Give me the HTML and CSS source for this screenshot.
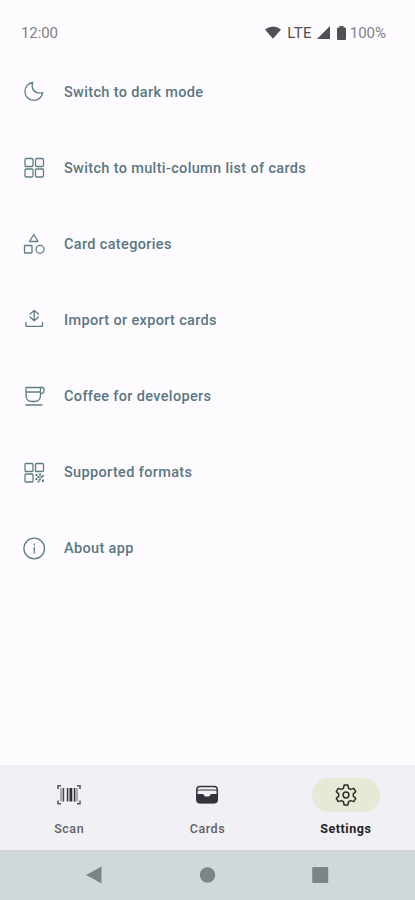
FILE: index.html
```html
<!DOCTYPE html>
<html lang="en">
<head>
<meta charset="utf-8">
<title>Settings</title>
<link rel="stylesheet" href="styles.css">
</head>
<body>
<div class="screen">
  <header class="status">
    <span class="clock">12:00</span>
    <div class="indicators">
      <svg class="wifi" viewBox="0 0 16 13"><path d="M0 3.500Q8-2.500 16 3.500L8 12.700Z"/></svg>
      <span class="network">LTE</span>
      <svg class="signal" viewBox="0 0 13 13"><path d="M13 0V13H0Z"/></svg>
      <svg class="battery" viewBox="0 0 9 14"><path d="M2.500 0h4v1.500H8q1 0 1 1V13q0 1-1 1H1q-1 0-1-1V2.500q0-1 1-1h1.500Z"/></svg>
      <span class="percent">100%</span>
    </div>
  </header>
  <main class="list">
    <div class="row">
      <svg class="icon" viewBox="0 0 24 24"><path d="M10.800 2.500A9 9 0 1 0 20.800 12.600Q18 13.800 14.500 12.400Q11 11 10.300 7.500Q10 5 10.800 2.500Z"/></svg>
      <span class="label">Switch to dark mode</span>
    </div>
    <div class="row">
      <svg class="icon" viewBox="0 0 24 24"><rect x="3" y="2.500" width="8" height="8" rx="1.300"/><rect x="13.500" y="2.500" width="8" height="8" rx="1.300"/><rect x="3" y="13" width="8" height="8" rx="1.300"/><rect x="13.500" y="13" width="8" height="8" rx="1.300"/></svg>
      <span class="label">Switch to multi-column list of cards</span>
    </div>
    <div class="row">
      <svg class="icon" viewBox="0 0 24 24"><path d="M11.800 2.500L16 9.500H7.500Z"/><rect x="2.500" y="13.500" width="7.500" height="7.500" rx=".5"/><circle cx="18" cy="17.300" r="4"/></svg>
      <span class="label">Card categories</span>
    </div>
    <div class="row">
      <svg class="icon" viewBox="0 0 24 24"><path d="M12.200 2.800V12.500M8 6L12.200 2.500L16.500 6M8 9L12.200 12.800L16.500 9M4 14.500V18.300H20.500V14.500"/></svg>
      <span class="label">Import or export cards</span>
    </div>
    <div class="row">
      <svg class="icon" viewBox="0 0 24 24"><path d="M4 2.500H20.500Q22 2.500 22 4V6Q22 8.500 18.500 8.500M4 2.500V10Q4 16.500 10 16.500H12.500Q18.500 16.500 18.500 10V2.500M4 7H18.500M4 20H20"/></svg>
      <span class="label">Coffee for developers</span>
    </div>
    <div class="row">
      <svg class="icon" viewBox="0 0 24 24"><rect x="3" y="2.500" width="8" height="8" rx="1"/><rect x="13.500" y="2.500" width="8" height="8" rx="1"/><rect x="3" y="13" width="8" height="8" rx="1"/><path class="dots" d="M13.500 13h2v2h-2zM17 12.500h2v2h-2zM20 14h2v1.500h-2zM15.500 15h2v2h-2zM18.500 15h2v2h-2zM13.500 17h2v2h-2zM17 17.500h2v2h-2zM15.500 19.500h2v2h-2zM20 18.500h2v2.500h-2z"/></svg>
      <span class="label">Supported formats</span>
    </div>
    <div class="row">
      <svg class="icon" viewBox="0 0 24 24"><circle cx="12.200" cy="11.500" r="10.300"/><path d="M12.300 10.500V16M12.300 7V8"/></svg>
      <span class="label">About app</span>
    </div>
  </main>
  <nav class="tabs">
    <div class="tab">
      <div class="pill">
        <svg class="tab-icon" viewBox="0 0 24 24"><path class="corner" d="M1 6V2.700H4M20 2.700H23V6M1 17.500V20.800H4M20 20.800H23V17.500"/><path class="bar-soft" d="M3 5h4.500v13.500H3zM16.500 5H21v13.500h-4.500z"/><path class="bar" d="M9.800 5h1.500v13.500H9.800zM12.500 5h2.800v13.500h-2.800zM17 5h1v13.500h-1zM6 5h.8v13.500H6z"/></svg>
      </div>
      <span class="tab-label">Scan</span>
    </div>
    <div class="tab">
      <div class="pill">
        <svg class="tab-icon" viewBox="0 0 24 24"><rect class="wallet" x="1.800" y="3.500" width="20.500" height="16" rx="3.200"/><path class="wallet-front" d="M1.500 11H7.500Q8.500 11 9 12.300Q9.500 13.500 11 13.500H13Q14.500 13.500 15 12.300Q15.500 11 16.500 11H22.500V17Q22.500 20.500 19 20.500H5Q1.500 20.500 1.500 17Z"/><path class="wallet-line" d="M2 8.300Q2.500 7 4.500 7H19.500Q21.500 7 22 8.300"/></svg>
      </div>
      <span class="tab-label">Cards</span>
    </div>
    <div class="tab active">
      <div class="pill">
        <svg class="tab-icon" viewBox="0 0 24 24"><path class="gear" d="M10.200 2h3.600l.8 3.300 2 1.100 3.200-1 1.900 3.300-2.400 2.200v2.200l2.400 2.200-1.900 3.300-3.200-1-2 1.100-.8 3.300h-3.600l-.8-3.300-2-1.100-3.200 1-1.900-3.300L4.700 13.100v-2.200L2.300 8.700l1.900-3.300 3.200 1 2-1.100Z"/><circle class="gear" cx="12" cy="12" r="2.900"/></svg>
      </div>
      <span class="tab-label">Settings</span>
    </div>
  </nav>
  <footer class="system">
    <svg class="key" viewBox="0 0 18 18"><path d="M1 9L16.500 .5V17.500Z"/></svg>
    <svg class="key" viewBox="0 0 18 18"><circle cx="9.500" cy="9" r="7.700"/></svg>
    <svg class="key" viewBox="0 0 18 18"><rect x="1.200" y="1" width="16" height="16" rx="1"/></svg>
  </footer>
</div>
</body>
</html>
```
FILE: styles.css
```css
* { box-sizing: border-box; }
body { margin: 0; font-family: Roboto, "Liberation Sans", sans-serif; background: #fefbff; }
svg { display: block; flex: none; }
.screen { width: 415px; height: 900px; display: flex; flex-direction: column; background: #fefbff; }

.status { height: 54px; padding: 11px 29px 0 21px; display: flex; align-items: center; justify-content: space-between; color: #828085; font-size: 15px; }
.clock { letter-spacing: -.1px; }
.indicators { display: flex; align-items: center; fill: #505054; }
.wifi { width: 16px; height: 13px; }
.network { margin: 0 5px 0 6px; color: #505054; letter-spacing: .3px; }
.signal { width: 13px; height: 13px; margin-right: 7px; }
.battery { width: 9px; height: 14px; margin-right: 4px; }

.list { flex: 1; }
.row { height: 76.150px; padding-left: 22px; display: flex; align-items: center; gap: 18px; }
.icon { width: 24px; height: 24px; fill: none; stroke: #5d7d85; stroke-width: 1.300; stroke-linejoin: round; stroke-linecap: round; }
.dots { fill: #5d7d85; stroke: none; }
.label { font-size: 14.500px; font-weight: 500; letter-spacing: .345px; color: #5a777f; white-space: nowrap; }

.tabs { height: 85px; padding-top: 13px; display: grid; grid-template-columns: repeat(3, 1fr); background: #f1f0f5; }
.tab { display: flex; flex-direction: column; align-items: center; gap: 9px; color: #605f65; }
.pill { width: 68px; height: 34px; border-radius: 17px; display: flex; align-items: center; justify-content: center; }
.active .pill { background: #e8e8d7; }
.tab-icon { width: 24px; height: 24px; }
.tab-label { font-size: 12.500px; line-height: 16px; font-weight: 500; letter-spacing: .55px; }
.active { color: #252428; }
.active .tab-label { font-weight: 700; }
.corner { fill: none; stroke: #55555d; stroke-width: 1.500; }
.bar-soft { fill: #aaaab0; }
.bar { fill: #303039; }
.wallet { fill: none; stroke: #34343e; stroke-width: 1.500; }
.wallet-front { fill: #34343e; }
.wallet-line { fill: none; stroke: #34343e; stroke-width: 1; }
.gear { fill: none; stroke: #2d2d28; stroke-width: 1.500; stroke-linejoin: round; }

.system { height: 50px; padding: 0 86px 0 85px; display: flex; align-items: center; justify-content: space-between; background: #d0d8db; fill: #7d8485; }
.key { width: 18px; height: 18px; }
```
